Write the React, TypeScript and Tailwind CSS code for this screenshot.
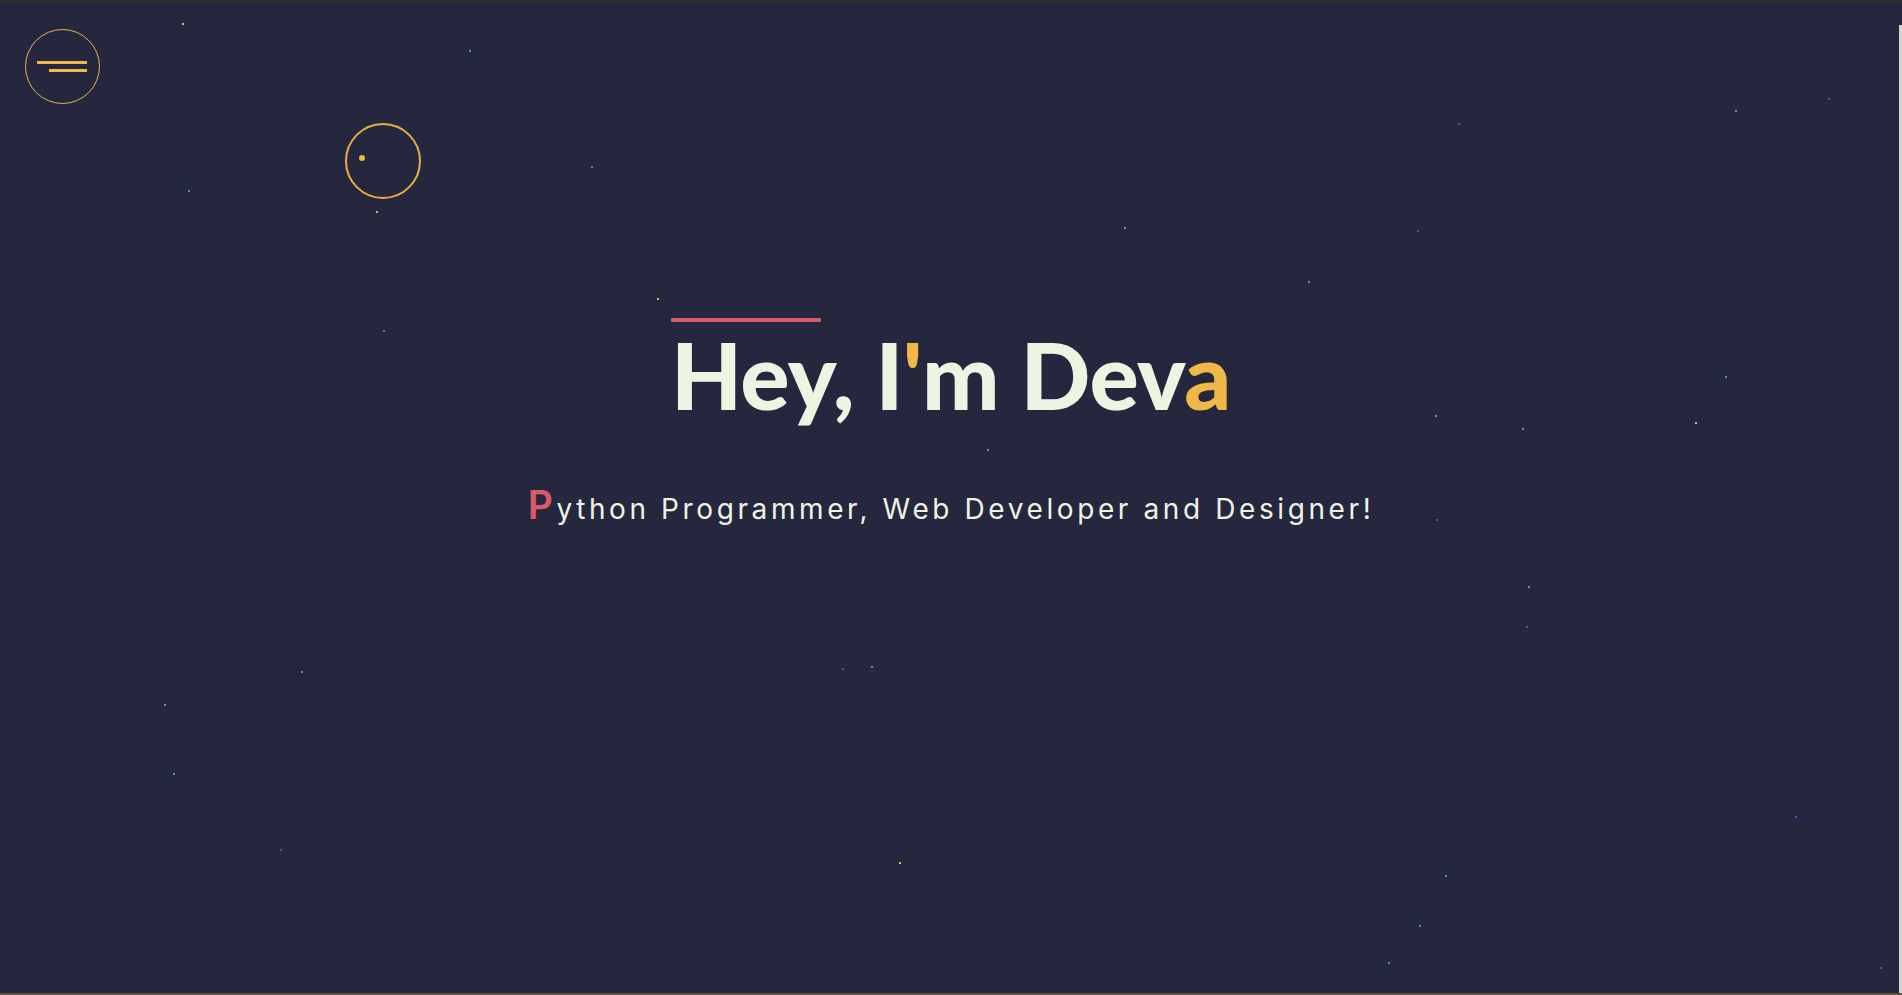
import React from "react";

const stars: [number, number, string][] = [
  [182, 23, "#e8b44a"], [469, 50, "#2aa6a0"], [188, 190, "#2aa6a0"], [591, 166, "#2aa6a0"],
  [376, 211, "#e8b44a"], [383, 330, "#2aa6a0"], [657, 298, "#e8b44a"], [1124, 227, "#4caf50"],
  [1308, 281, "#4caf50"], [1417, 230, "#8a2be2"], [1458, 123, "#8a2be2"], [1735, 110, "#4caf50"],
  [1828, 98, "#8a2be2"], [1725, 376, "#2aa6a0"], [1695, 422, "#e8b44a"], [1435, 415, "#4caf50"],
  [1522, 428, "#4caf50"], [987, 449, "#4caf50"], [1436, 519, "#8a2be2"], [1528, 586, "#4caf50"],
  [1526, 626, "#8a2be2"], [842, 668, "#8a2be2"], [871, 666, "#4caf50"], [301, 671, "#2aa6a0"],
  [164, 704, "#4caf50"], [173, 773, "#2aa6a0"], [280, 849, "#8a2be2"], [899, 862, "#e8b44a"],
  [1445, 875, "#2aa6a0"], [1419, 925, "#2aa6a0"], [1388, 962, "#2aa6a0"], [1795, 816, "#8a2be2"],
  [1880, 967, "#8a2be2"],
];

export default function App() {
  return (
    <div className="relative w-full h-[995px] overflow-hidden bg-[#25273f]">
      <div className="absolute top-0 left-0 right-0 h-[3px] bg-[#2e2e2e]" />
      <div className="absolute top-[25px] right-0 bottom-0 w-[3px] bg-[#d4d4d4]" />
      <div className="absolute bottom-0 left-0 right-0 h-[2px] bg-[#5b5242]" />

      {stars.map(([x, y, c], i) => (
        <span
          key={i}
          className="absolute w-[2px] h-[2px]"
          style={{ left: x, top: y, background: c }}
        />
      ))}

      <button className="absolute left-[25px] top-[29px] w-[75px] h-[75px] rounded-full border border-[#e6b44a] flex flex-col items-end justify-center gap-[5px] pr-[12px]">
        <span className="block w-[50px] h-[3px] bg-[#f0b847]" />
        <span className="block w-[38px] h-[3px] bg-[#f0b847]" />
      </button>

      <div className="absolute left-[345px] top-[123px] w-[76px] h-[76px] rounded-full border-2 border-[#e6ae3c]" />
      <div className="absolute left-[359px] top-[155px] w-[6px] h-[6px] rounded-full bg-[#f0b847]" />

      <main className="flex flex-col items-center pt-[318px]">
        <div className="flex flex-col items-start">
          <div className="w-[150px] h-[4px] bg-[#d95a69]" />
          <h1 className="mt-[2px] font-['Lato',sans-serif] font-black text-[92px] leading-[1.1] tracking-[-0.5px] text-[#eef4e2]">
            Hey, I<span className="text-[#f0b847]">'</span>m Dev<span className="text-[#f0b847]">a</span>
          </h1>
        </div>
        <p className="mt-[51px] font-['Inter',sans-serif] text-[28px] tracking-[3.6px] text-[#eef4e2]">
          <span className="text-[39px] font-semibold text-[#d95a69]">P</span>ython Programmer, Web Developer and Designer!
        </p>
      </main>
    </div>
  );
}
